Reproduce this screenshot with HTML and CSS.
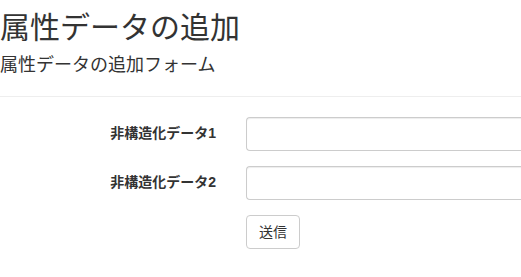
FILE: index.html
```html
<!DOCTYPE html>
<html lang="ja">
<head>
<meta charset="utf-8">
<title>属性データの追加</title>
<link rel="stylesheet" href="styles.css">
</head>
<body>
<div class="page">
  <div class="page-header">
    <h2 class="title">属性データの追加</h2>
    <h4 class="subtitle">属性データの追加フォーム</h4>
  </div>
  <form class="form">
    <div class="form-row">
      <label class="form-label" for="d1">非構造化データ1</label>
      <input class="form-input" id="d1" type="text">
    </div>
    <div class="form-row">
      <label class="form-label" for="d2">非構造化データ2</label>
      <input class="form-input" id="d2" type="text">
    </div>
    <div class="form-row">
      <span class="form-label"></span>
      <div><button class="btn" type="button">送信</button></div>
    </div>
  </form>
</div>
</body>
</html>
```
FILE: styles.css
```css
html, body {
  margin: 0;
  padding: 0;
  background: #fff;
  overflow: hidden;
}
body {
  font-family: "Liberation Sans", "Noto Sans CJK JP", sans-serif;
  color: #333;
  font-size: 14px;
  line-height: 1.42857;
}
.page {
  width: 100%;
}
.page-header {
  border-bottom: 1px solid #eee;
  padding-bottom: 20px;
}
.title {
  margin: 11px 0 0 0;
  font-size: 30px;
  font-weight: 400;
  line-height: 1.1;
}
.subtitle {
  margin: 12px 0 0 0;
  font-size: 18px;
  font-weight: 400;
  line-height: 1.1;
}
.form {
  padding-top: 20px;
  display: flex;
  flex-direction: column;
  gap: 15px;
}
.form-row {
  display: grid;
  grid-template-columns: 216px 1fr;
  column-gap: 30px;
  align-items: center;
}
.form-label {
  text-align: right;
  font-weight: 700;
  font-size: 14px;
}
.form-input {
  height: 34px;
  box-sizing: border-box;
  border: 1px solid #ccc;
  border-right: 0;
  border-radius: 4px 0 0 4px;
  box-shadow: inset 0 1px 1px rgba(0,0,0,0.075);
  padding: 6px 12px;
  font: inherit;
  width: 100%;
  margin: 0;
}
.btn {
  height: 34px;
  box-sizing: border-box;
  padding: 6px 12px;
  border: 1px solid #ccc;
  border-radius: 4px;
  background: #fff;
  color: #333;
  font: inherit;
  font-size: 14px;
  line-height: 20px;
  margin: 0;
}
```
